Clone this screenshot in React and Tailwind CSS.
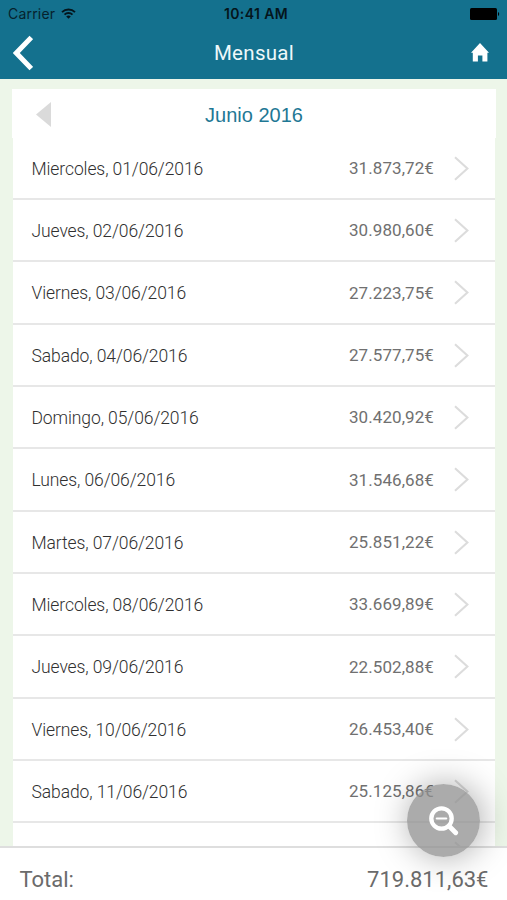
import React from 'react';

const days = [
  { label: 'Miercoles, 01/06/2016', amount: '31.873,72€' },
  { label: 'Jueves, 02/06/2016', amount: '30.980,60€' },
  { label: 'Viernes, 03/06/2016', amount: '27.223,75€' },
  { label: 'Sabado, 04/06/2016', amount: '27.577,75€' },
  { label: 'Domingo, 05/06/2016', amount: '30.420,92€' },
  { label: 'Lunes, 06/06/2016', amount: '31.546,68€' },
  { label: 'Martes, 07/06/2016', amount: '25.851,22€' },
  { label: 'Miercoles, 08/06/2016', amount: '33.669,89€' },
  { label: 'Jueves, 09/06/2016', amount: '22.502,88€' },
  { label: 'Viernes, 10/06/2016', amount: '26.453,40€' },
  { label: 'Sabado, 11/06/2016', amount: '25.125,86€' },
];

const StatusBar = () => (
  <div className="grid h-[27px] grid-cols-3 items-center pl-2 pr-[7px] font-['Inter',sans-serif] text-[13.5px] leading-none text-[#06222d]">
    <div className="flex items-center gap-[6px]">
      <span className="pt-px text-[14px] tracking-[0.2px]">Carrier</span>
      <svg width="15" height="11" viewBox="0 0 15 11" fill="none" stroke="#04151c" strokeWidth="1.9">
        <path d="M1 4.1a9.4 9.4 0 0 1 13 0" />
        <path d="M3.5 6.6a5.8 5.8 0 0 1 8 0" />
        <path d="M7.5 10.8 5.2 8.5a3.3 3.3 0 0 1 4.6 0z" fill="#04151c" stroke="none" />
      </svg>
    </div>
    <span className="pl-1 pt-px text-center text-[14px] font-semibold tracking-[0.4px] text-[#04151c]">10:41 AM</span>
    <svg className="justify-self-end" width="30" height="12" viewBox="0 0 30 12" fill="#000">
      <rect width="27" height="12" rx="1.5" />
      <path d="M28 4c1.6.6 1.6 3.4 0 4z" />
    </svg>
  </div>
);

const Header = () => (
  <header className="h-[79px] shrink-0 bg-[#14718e]">
    <StatusBar />
    <div className="flex h-[51px] items-center justify-between pl-[13px] pr-[18px]">
      <button aria-label="Volver">
        <svg width="20" height="36" viewBox="0 0 20 36" fill="none" stroke="#fff" strokeWidth="5">
          <path d="M18.3 2.4 3.3 18l15 15.6" />
        </svg>
      </button>
      <h1 className="pl-1 pt-px text-[20.5px] tracking-[0.3px] text-[#eef8fa]">Mensual</h1>
      <button aria-label="Inicio">
        <svg width="18" height="19" viewBox="0 0 18 19" fill="#fff">
          <path d="M9 0 18 9.8h-1.6V18.4h-5v-6H6.9v6H1.8V9.8H0z" />
        </svg>
      </button>
    </div>
  </header>
);

const Chevron = () => (
  <svg width="15" height="25" viewBox="0 0 15 25" fill="none" stroke="#dcdcdc" strokeWidth="2.1">
    <path d="M1 1.2 13.4 12.5 1 23.8" />
  </svg>
);

const DayRow = ({ label, amount }) => (
  <li className="flex h-[62.35px] shrink-0 items-center border-b-2 border-[#e7e7e7] pl-[18px] pr-[26px] pt-px">
    <span className="flex-1 pl-[0.5px] pt-px text-[17.5px] font-light tracking-[-0.1px] text-[#303030]">{label}</span>
    <span className="mr-5 pt-px text-[17px] tracking-[0.08px] text-[#707070]">{amount}</span>
    <Chevron />
  </li>
);

const App = () => {
  return (
    <div className="relative flex h-[900px] w-[507px] flex-col overflow-hidden bg-[#edf6e9] font-['Roboto',sans-serif]">
      <Header />
      <main className="flex min-h-0 flex-1 flex-col overflow-hidden px-3 pt-[10px]">
        <div className="grid h-[48.5px] w-[484px] shrink-0 grid-cols-3 items-center bg-white px-6 pt-[3px]">
          <svg width="15" height="25" viewBox="0 0 15 25" fill="#dadada">
            <path d="M15 0v25L0 12.5z" />
          </svg>
          <h2 className="pt-px text-center font-['Liberation_Sans',sans-serif] text-[20px] text-[#1f7895]">Junio 2016</h2>
        </div>
        <ul className="ml-px flex w-[482px] flex-1 flex-col bg-white">
          {days.map((day) => (
            <DayRow key={day.label} label={day.label} amount={day.amount} />
          ))}
          {/* next day, cut off by the footer */}
          <DayRow />
        </ul>
      </main>
      <footer className="flex h-[54px] shrink-0 items-center justify-between border-t-2 border-[#dedede] bg-white pl-[19.5px] pr-[18.5px] pt-2.5 text-[22px] text-[#6b6b6b]">
        <span>Total:</span>
        <span>719.811,63€</span>
      </footer>

      {/* floating search button */}
      <button
        aria-label="Buscar"
        className="absolute left-[407px] top-[784px] flex h-[73px] w-[73px] items-center justify-center rounded-full bg-[#8f8f8f]/75 shadow-[2px_0px_34px_rgba(0,0,0,0.34)]"
      >
        <svg width="30" height="30" viewBox="0 0 30 30" fill="none" stroke="#fff" strokeLinecap="round">
          <circle cx="12.5" cy="12.5" r="10.2" strokeWidth="4.3" />
          <path d="M7.8 12.5h9.4" strokeWidth="2.2" />
          <path d="m20 20 6.7 6.7" strokeWidth="4.8" />
        </svg>
      </button>
    </div>
  );
};

export default App;
